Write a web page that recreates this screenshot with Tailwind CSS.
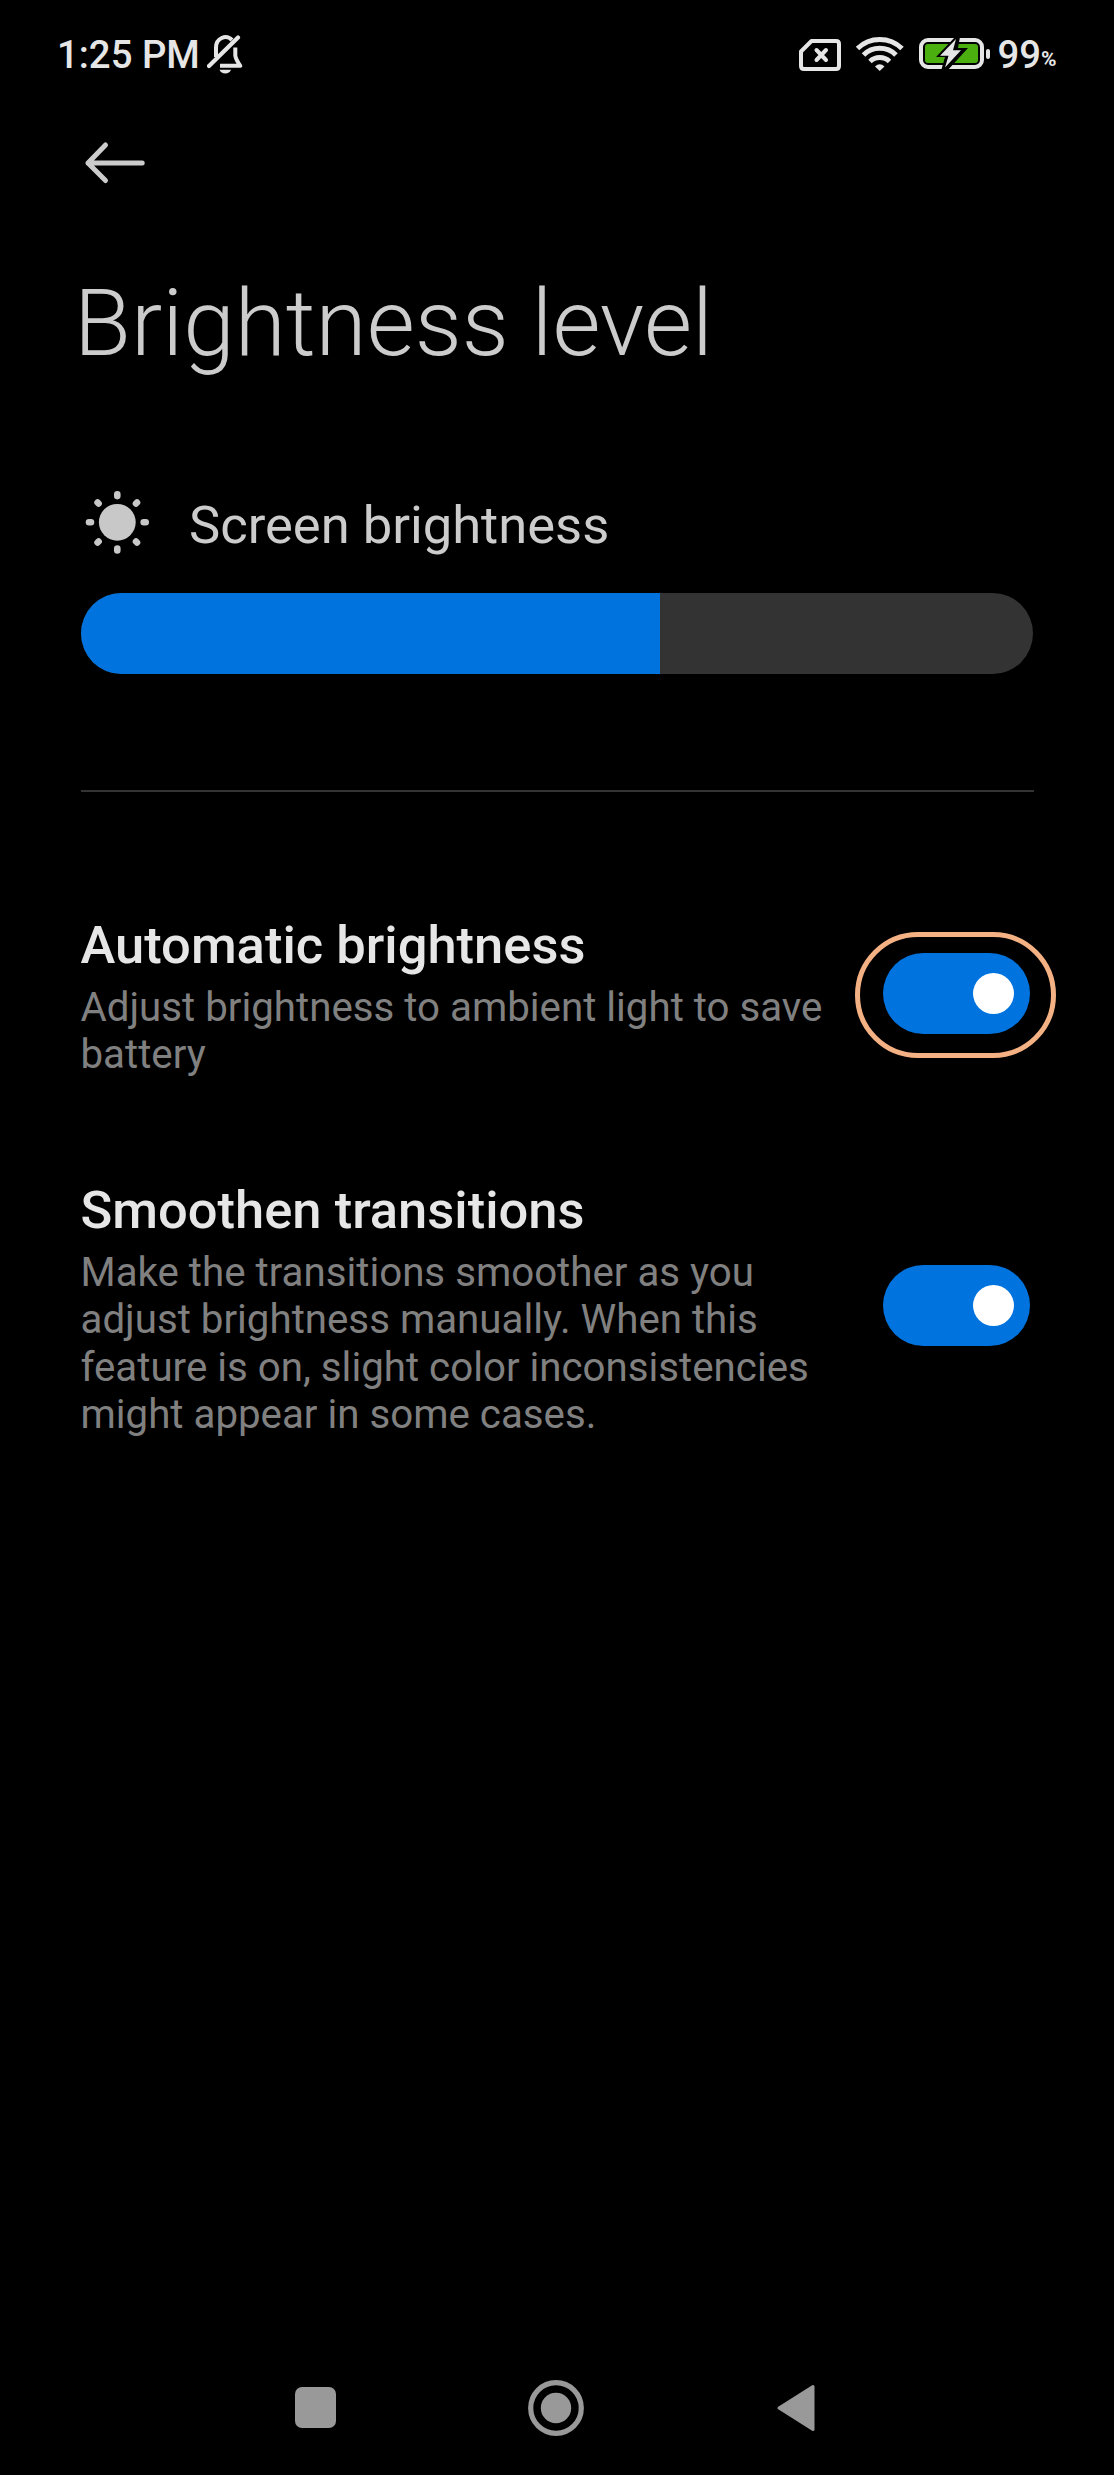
<!DOCTYPE html>
<html lang="en">
<head>
<meta charset="utf-8">
<title>Brightness level</title>
<script src="https://cdn.jsdelivr.net/npm/@tailwindcss/browser@4"></script>
</head>
<body class="bg-black">
<div class="flex h-[2475px] w-[1114px] flex-col overflow-hidden bg-black font-[Roboto,sans-serif] text-[#cccccc]">
  <header class="flex h-[108px] items-center justify-between pt-[2px] pl-[57px] pr-[56px] text-[38.300px] font-medium leading-none text-[#e6e6e6]">
    <div class="flex items-center">
      <span class="w-[150px] whitespace-nowrap">1:25 PM</span>
      <svg class="h-[40px] w-[38px]" viewBox="207 35 38 40" fill="none">
        <path d="M216 57V47.500A9.500 10.300 0 0 1 232 40" stroke="#e6e6e6" stroke-width="4"/>
        <path d="M235.300 47.500V55.500Q235.800 59.500 240.300 65.800H220" stroke="#e6e6e6" stroke-width="4" stroke-linejoin="round"/>
        <path d="M209 66L238 37.500" stroke="#e6e6e6" stroke-width="4.200" stroke-linecap="round"/>
        <path d="M219.500 69.700H231Q229.500 73.500 225.300 73.500T219.500 69.700Z" fill="#e6e6e6"/>
      </svg>
    </div>
    <div class="flex items-center">
      <svg class="h-[40px] w-[198px]" viewBox="799 35 198 40" fill="none">
        <path d="M811.500 41H836Q839 41 839 44V66Q839 69 836 69H804Q801 69 801 66V51.500Z" stroke="#e6e6e6" stroke-width="4" stroke-linejoin="round"/>
        <path d="M816.500 50L826 60M826 50L816.500 60" stroke="#e6e6e6" stroke-width="4" stroke-linecap="round"/>
        <g stroke="#e6e6e6" stroke-width="5">
          <path d="M857.500 48.500A32 32 0 0 1 902 48.500"/>
          <path d="M863.500 55A23 23 0 0 1 896 55"/>
          <path d="M870 61.500A14 14 0 0 1 889.500 61.500"/>
        </g>
        <path d="M875 66.500Q879.700 62 884.500 66.500L879.700 71Z" fill="#e6e6e6"/>
        <rect x="921" y="40" width="61" height="27" rx="7" stroke="#e6e6e6" stroke-width="4"/>
        <rect x="925" y="44" width="53" height="19" rx="3" fill="#4caf10"/>
        <path d="M955 37L936 57H945L941 71H947L968 48H958L960 37Z" fill="#000"/>
        <path d="M956 39L940 55.800H948.500L945 67.500L961 50.300H953Z" fill="#e6e6e6"/>
        <rect x="986" y="49" width="4" height="10" rx="2" fill="#e6e6e6"/>
      </svg>
      <span>99</span><span class="w-[17px] pt-[8px] text-[21px] font-bold">%</span>
    </div>
  </header>

  <main class="flex grow flex-col px-[81px]">
    <svg class="mt-[31px] h-[48px] w-[64px]" viewBox="81 139 64 48" fill="none" stroke="#cccccc" stroke-width="5" stroke-linecap="round" stroke-linejoin="round">
      <path d="M142.200 163H88M105.500 145L88 163L105.500 180.500"/>
    </svg>
    <h1 class="mt-[80px] -ml-[7px] h-[113px] whitespace-nowrap text-[92.900px] font-light leading-[113px]">Brightness level</h1>

    <section class="mt-[106px]">
      <div class="flex h-[72px] items-center">
        <svg class="h-[72px] w-[108px]" viewBox="81 486 108 72" fill="#c8c8c8">
          <circle cx="117.300" cy="522.300" r="18.400"/>
          <g stroke="#c8c8c8" stroke-width="6.600" stroke-linecap="round">
            <path d="M117.300 494.300v1.800M117.300 548.600v1.800M89 522.300h2M143.700 522.300h2M97.600 502.500l1 1M136 541.500l1 1M97.600 542.500l1-1M136 503.500l1-1"/>
          </g>
        </svg>
        <span class="whitespace-nowrap pt-[6px] text-[52.500px] leading-[60px]">Screen brightness</span>
      </div>
      <div class="mt-[35px] h-[81px] w-[952px] overflow-hidden rounded-full bg-[#333333]">
        <div class="h-full w-[579px] bg-[#0073de]"></div>
      </div>
    </section>

    <hr class="mt-[116px] h-[2px] w-[953px] border-0 bg-[#333333]">

    <section class="mt-[122px] flex w-[949px] items-start justify-between">
      <div class="-ml-[0.5px]">
        <h2 class="h-[62px] whitespace-nowrap text-[52.500px] font-medium leading-[62px] text-[#e6e6e6]">Automatic brightness</h2>
        <p class="mt-[7.500px] whitespace-nowrap text-[40.250px] leading-[47.400px] text-[#808080]">Adjust brightness to ambient light to save<br>battery</p>
      </div>
      <div class="relative mt-[39px] h-[81px] w-[147px] rounded-full bg-[#0073de] p-[20px] pr-[16px]">
        <div class="ml-auto size-[41px] rounded-full bg-white"></div>
        <div class="absolute -left-[28px] -top-[21px] h-[126px] w-[201px] rounded-full border-5 border-[#f4b183]"></div>
      </div>
    </section>

    <section class="mt-[101px] flex w-[949px] items-start justify-between">
      <div class="-ml-[0.5px]">
        <h2 class="h-[62px] whitespace-nowrap text-[52.500px] font-medium leading-[62px] text-[#e6e6e6]">Smoothen transitions</h2>
        <p class="mt-[7.500px] whitespace-nowrap text-[40.250px] leading-[47.400px] text-[#808080]">Make the transitions smoother as you<br>adjust brightness manually. When this<br>feature is on, slight color inconsistencies<br>might appear in some cases.</p>
      </div>
      <div class="mt-[86px] h-[81px] w-[147px] rounded-full bg-[#0073de] p-[20px] pr-[16px]">
        <div class="ml-auto size-[41px] rounded-full bg-white"></div>
      </div>
    </section>
  </main>

  <nav class="flex h-[135px] items-center justify-between pl-[295px] pr-[298px]">
    <div class="size-[41px] rounded-[7px] bg-[#999999]"></div>
    <svg class="size-[58px]" viewBox="0 0 58 58" fill="none">
      <circle cx="29" cy="29" r="25.300" stroke="#999999" stroke-width="5.200"/>
      <circle cx="29" cy="29" r="15.200" fill="#999999"/>
    </svg>
    <svg class="h-[48px] w-[40px]" viewBox="0 0 40 48">
      <path d="M3 24L37 2.500V45.500Z" fill="#999999" stroke="#999999" stroke-width="3" stroke-linejoin="round"/>
    </svg>
  </nav>
</div>
</body>
</html>
